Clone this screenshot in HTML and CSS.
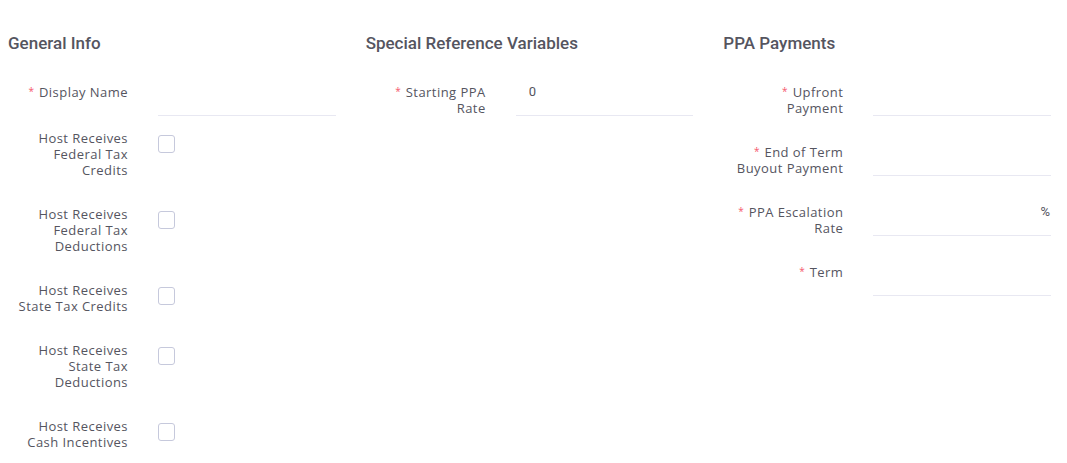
FILE: index.html
```html
<!DOCTYPE html>
<html>
<head>
<meta charset="utf-8">
<link rel="stylesheet" href="styles.css">
</head>
<body>
<div class="grid">
  <section class="col">
    <h2 class="title">General Info</h2>
    <div class="row row-tight">
      <label class="lbl req">Display Name</label>
      <div class="field"><div class="input"></div></div>
    </div>
    <div class="row">
      <label class="lbl">Host Receives Federal Tax Credits</label>
      <div class="field"><span class="check"></span></div>
    </div>
    <div class="row">
      <label class="lbl">Host Receives Federal Tax Deductions</label>
      <div class="field"><span class="check"></span></div>
    </div>
    <div class="row">
      <label class="lbl">Host Receives State Tax Credits</label>
      <div class="field"><span class="check"></span></div>
    </div>
    <div class="row">
      <label class="lbl">Host Receives State Tax Deductions</label>
      <div class="field"><span class="check"></span></div>
    </div>
    <div class="row">
      <label class="lbl">Host Receives Cash Incentives</label>
      <div class="field"><span class="check"></span></div>
    </div>
  </section>
  <section class="col">
    <h2 class="title">Special Reference Variables</h2>
    <div class="row">
      <label class="lbl req">Starting PPA Rate</label>
      <div class="field"><div class="input"><span class="val">0</span></div></div>
    </div>
  </section>
  <section class="col">
    <h2 class="title">PPA Payments</h2>
    <div class="row">
      <label class="lbl req">Upfront Payment</label>
      <div class="field"><div class="input"></div></div>
    </div>
    <div class="row">
      <label class="lbl req">End of Term Buyout Payment</label>
      <div class="field"><div class="input"></div></div>
    </div>
    <div class="row">
      <label class="lbl req">PPA Escalation Rate</label>
      <div class="field"><div class="input"><span class="val"></span><span class="suffix">%</span></div></div>
    </div>
    <div class="row">
      <label class="lbl req">Term</label>
      <div class="field"><div class="input"></div></div>
    </div>
  </section>
</div>
</body>
</html>
```
FILE: styles.css
```css
html, body {
  margin: 0;
  padding: 0;
  background: #ffffff;
}
body {
  padding: 0 16px 0 8px;
  font-family: "Open Sans", "Liberation Sans", sans-serif;
  color: #55555f;
}
.grid {
  display: grid;
  grid-template-columns: repeat(3, 1fr);
  column-gap: 30px;
}
.title {
  margin: 0;
  padding-top: 31px;
  height: 24px;
  line-height: 24px;
  font-family: Roboto, "Liberation Sans", sans-serif;
  font-weight: 500;
  font-size: 17px;
  color: #55555f;
  margin-bottom: 29px;
}
.row {
  display: flex;
  column-gap: 30px;
  margin-bottom: 28px;
  align-items: flex-start;
}
.row-tight {
  margin-bottom: 14px;
}
.lbl {
  width: 120px;
  flex: none;
  text-align: right;
  font-size: 13px;
  letter-spacing: 0.45px;
  line-height: 16px;
  color: #55555f;
}
.req::before {
  content: "*";
  display: inline-block;
  color: #f5576c;
  font-size: 10px;
  line-height: 10px;
  letter-spacing: 0;
  margin-right: 5px;
  vertical-align: 2px;
}
.field {
  flex: 1;
  min-width: 0;
}
.input {
  height: 31px;
  border-bottom: 1px solid #e8e8f2;
  display: flex;
  justify-content: space-between;
  padding: 0 1px 0 13px;
  font-family: Roboto, "Liberation Sans", sans-serif;
  font-weight: 400;
  font-size: 13px;
  line-height: 16px;
  color: #555560;
}
.check {
  display: block;
  width: 15px;
  height: 16px;
  margin-top: 5px;
  border: 1px solid #c6c9dc;
  border-radius: 3px;
  background: #fff;
}
```
